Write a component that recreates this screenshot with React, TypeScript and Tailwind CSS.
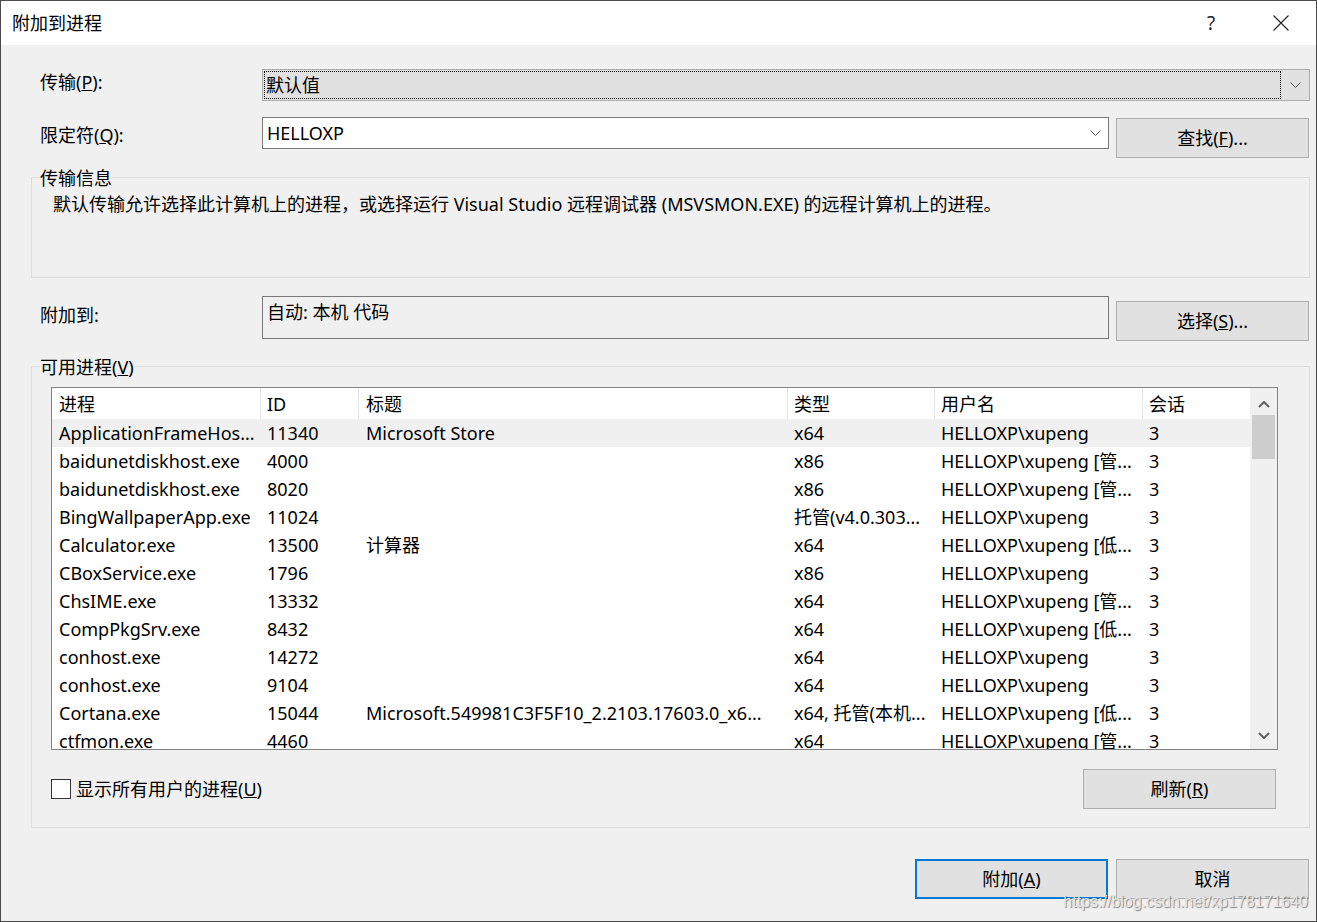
import React from "react";

type Row = [string, string, string, string, string, string];

const rows: Row[] = [
  ["ApplicationFrameHos...", "11340", "Microsoft Store", "x64", "HELLOXP\\xupeng", "3"],
  ["baidunetdiskhost.exe", "4000", "", "x86", "HELLOXP\\xupeng [管...", "3"],
  ["baidunetdiskhost.exe", "8020", "", "x86", "HELLOXP\\xupeng [管...", "3"],
  ["BingWallpaperApp.exe", "11024", "", "托管(v4.0.303...", "HELLOXP\\xupeng", "3"],
  ["Calculator.exe", "13500", "计算器", "x64", "HELLOXP\\xupeng [低...", "3"],
  ["CBoxService.exe", "1796", "", "x86", "HELLOXP\\xupeng", "3"],
  ["ChsIME.exe", "13332", "", "x64", "HELLOXP\\xupeng [管...", "3"],
  ["CompPkgSrv.exe", "8432", "", "x64", "HELLOXP\\xupeng [低...", "3"],
  ["conhost.exe", "14272", "", "x64", "HELLOXP\\xupeng", "3"],
  ["conhost.exe", "9104", "", "x64", "HELLOXP\\xupeng", "3"],
  ["Cortana.exe", "15044", "Microsoft.549981C3F5F10_2.2103.17603.0_x6...", "x64, 托管(本机...", "HELLOXP\\xupeng [低...", "3"],
  ["ctfmon.exe", "4460", "", "x64", "HELLOXP\\xupeng [管...", "3"],
];

const Chevron = () => (
  <svg width="11" height="6" viewBox="0 0 11 6">
    <path d="M0.5 0.5 L5.5 5.5 L10.5 0.5" fill="none" stroke="#555" strokeWidth="1" />
  </svg>
);

const ScrollArrow = ({ down }: { down?: boolean }) => (
  <svg width="12" height="7" viewBox="0 0 12 7">
    <path
      d={down ? "M1 1 L6 6 L11 1" : "M1 6 L6 1 L11 6"}
      fill="none"
      stroke="#606060"
      strokeWidth="2"
    />
  </svg>
);

const Btn = ({ children, primary }: { children: React.ReactNode; primary?: boolean }) => (
  <div
    className={
      primary
        ? "w-[193px] h-[40px] border-2 border-[#0078d7] bg-[#e1e1e1] flex items-center justify-center shrink-0"
        : "w-[193px] h-[40px] border border-[#adadad] bg-[#e1e1e1] flex items-center justify-center shrink-0"
    }
  >
    {children}
  </div>
);

const cols = "grid grid-cols-[209px_98px_429px_147px_208px_107px]";

export default function App() {
  return (
    <div className="relative w-[1317px] h-[922px] border border-[#4a4a4a] bg-[#f0f0f0] text-black font-['Noto_Sans','Noto_Sans_CJK_SC',sans-serif] text-[18px] leading-[24px] overflow-hidden">
      {/* title bar */}
      <div className="h-[44px] bg-white flex items-center pl-[11px] pr-[12px]">
        <span>附加到进程</span>
        <div className="flex-1" />
        <div className="w-[46px] h-[44px] flex items-center justify-center mr-[24px] text-[19px] text-[#222]">?</div>
        <div className="w-[46px] h-[44px] flex items-center justify-center">
          <svg width="16" height="16" viewBox="0 0 16 16">
            <path d="M0.5 0.5 L15.5 15.5 M15.5 0.5 L0.5 15.5" stroke="#222" strokeWidth="1.1" fill="none" />
          </svg>
        </div>
      </div>

      <div className="pl-[30px] pr-[6px]">
        {/* row 1 */}
        <div className="mt-[24px] flex items-start">
          <div className="w-[231px] pl-[9px] mt-[1px] shrink-0">
            传输(<span className="underline">P</span>):
          </div>
          <div className="flex-1 h-[32px] border border-[#adadad] bg-[#e1e1e1] flex items-center">
            <div className="ml-[1px] flex-1 h-[28px] border border-dotted border-black pl-[1px] leading-[27px]">默认值</div>
            <div className="w-[28px] flex justify-center items-center">
              <Chevron />
            </div>
          </div>
        </div>

        {/* row 2 */}
        <div className="mt-[16px] flex items-start">
          <div className="w-[231px] pl-[9px] mt-[6px] shrink-0">
            限定符(<span className="underline">Q</span>):
          </div>
          <div className="w-[847px] h-[32px] border border-[#7a7a7a] bg-white flex items-center pl-[4px] shrink-0">
            <span className="flex-1">HELLOXP</span>
            <div className="w-[26px] flex justify-center items-center">
              <Chevron />
            </div>
          </div>
          <div className="ml-[7px] mt-[1px]">
            <Btn>
              查找(<span className="underline">F</span>)...
            </Btn>
          </div>
        </div>

        {/* group 1 */}
        <div className="relative mt-[19px] h-[101px] border border-[#dcdcdc] pl-[21px] pt-[14px]">
          <span className="absolute left-[8px] top-[-12px] bg-[#f0f0f0] leading-[24px]">传输信息</span>
          <div>默认传输允许选择此计算机上的进程，或选择运行 Visual Studio 远程调试器 (MSVSMON.EXE) 的远程计算机上的进程。</div>
        </div>

        {/* attach to */}
        <div className="mt-[18px] flex items-start">
          <div className="w-[231px] pl-[9px] mt-[7px] shrink-0">附加到:</div>
          <div className="w-[847px] h-[43px] border border-[#7a7a7a] pl-[4px] pt-[3px] shrink-0">自动: 本机 代码</div>
          <div className="ml-[7px] mt-[5px]">
            <Btn>
              选择(<span className="underline">S</span>)...
            </Btn>
          </div>
        </div>

        {/* group 2 */}
        <div className="relative mt-[25px] border border-[#dcdcdc] pl-[19px] pr-[31px] pt-[20px] pb-[18px]">
          <span className="absolute left-[8px] top-[-12px] bg-[#f0f0f0] leading-[24px]">
            可用进程(<span className="underline">V</span>)
          </span>
          <div className="h-[363px] border border-[#828282] bg-white flex overflow-hidden">
            <div className="w-[1198px] flex flex-col overflow-hidden">
              <div className={cols + " h-[31px] shrink-0"}>
                {["进程", "ID", "标题", "类型", "用户名", "会话"].map((h, i) => (
                  <div
                    key={i}
                    className={
                      i === 5
                        ? "pl-[6px] flex items-center"
                        : i === 0 || i === 2
                        ? "pl-[7px] flex items-center border-r border-[#e5e5e5]"
                        : "pl-[6px] flex items-center border-r border-[#e5e5e5]"
                    }
                  >
                    {h}
                  </div>
                ))}
              </div>
              {rows.map((r, ri) => (
                <div key={ri} className={cols + (ri === 0 ? " h-[28px] shrink-0 bg-[#f0f0f0]" : " h-[28px] shrink-0")}>
                  {r.map((c, ci) => (
                    <div
                      key={ci}
                      className={
                        ci === 0 || ci === 2
                          ? "pl-[7px] leading-[28px] whitespace-nowrap overflow-hidden"
                          : "pl-[6px] leading-[28px] whitespace-nowrap overflow-hidden"
                      }
                    >
                      {c}
                    </div>
                  ))}
                </div>
              ))}
            </div>
            <div className="flex-1 bg-[#f0f0f0] flex flex-col">
              <div className="h-[27px] flex items-end justify-center pb-[7px]">
                <ScrollArrow />
              </div>
              <div className="mx-[2px] h-[44px] bg-[#cdcdcd]" />
              <div className="flex-1" />
              <div className="h-[27px] flex items-center justify-center">
                <ScrollArrow down />
              </div>
            </div>
          </div>
          <div className="mt-[19px] flex items-center justify-between pr-[2px]">
            <div className="flex items-center">
              <div className="w-[20px] h-[20px] border border-[#333] bg-white" />
              <span className="ml-[5px]">
                显示所有用户的进程(<span className="underline">U</span>)
              </span>
            </div>
            <Btn>
              刷新(<span className="underline">R</span>)
            </Btn>
          </div>
        </div>

        {/* bottom buttons */}
        <div className="mt-[31px] flex justify-end gap-[8px] pr-[1px]">
          <Btn primary>
            附加(<span className="underline">A</span>)
          </Btn>
          <Btn>取消</Btn>
        </div>
      </div>

      <div className="absolute right-[8px] bottom-[10px] text-[16px] leading-[18px] font-['Liberation_Sans',sans-serif] text-[#e4e4e4] [text-shadow:1px_1px_1px_rgba(0,0,0,0.45)]">
        https://blog.csdn.net/xp178171640
      </div>
    </div>
  );
}
